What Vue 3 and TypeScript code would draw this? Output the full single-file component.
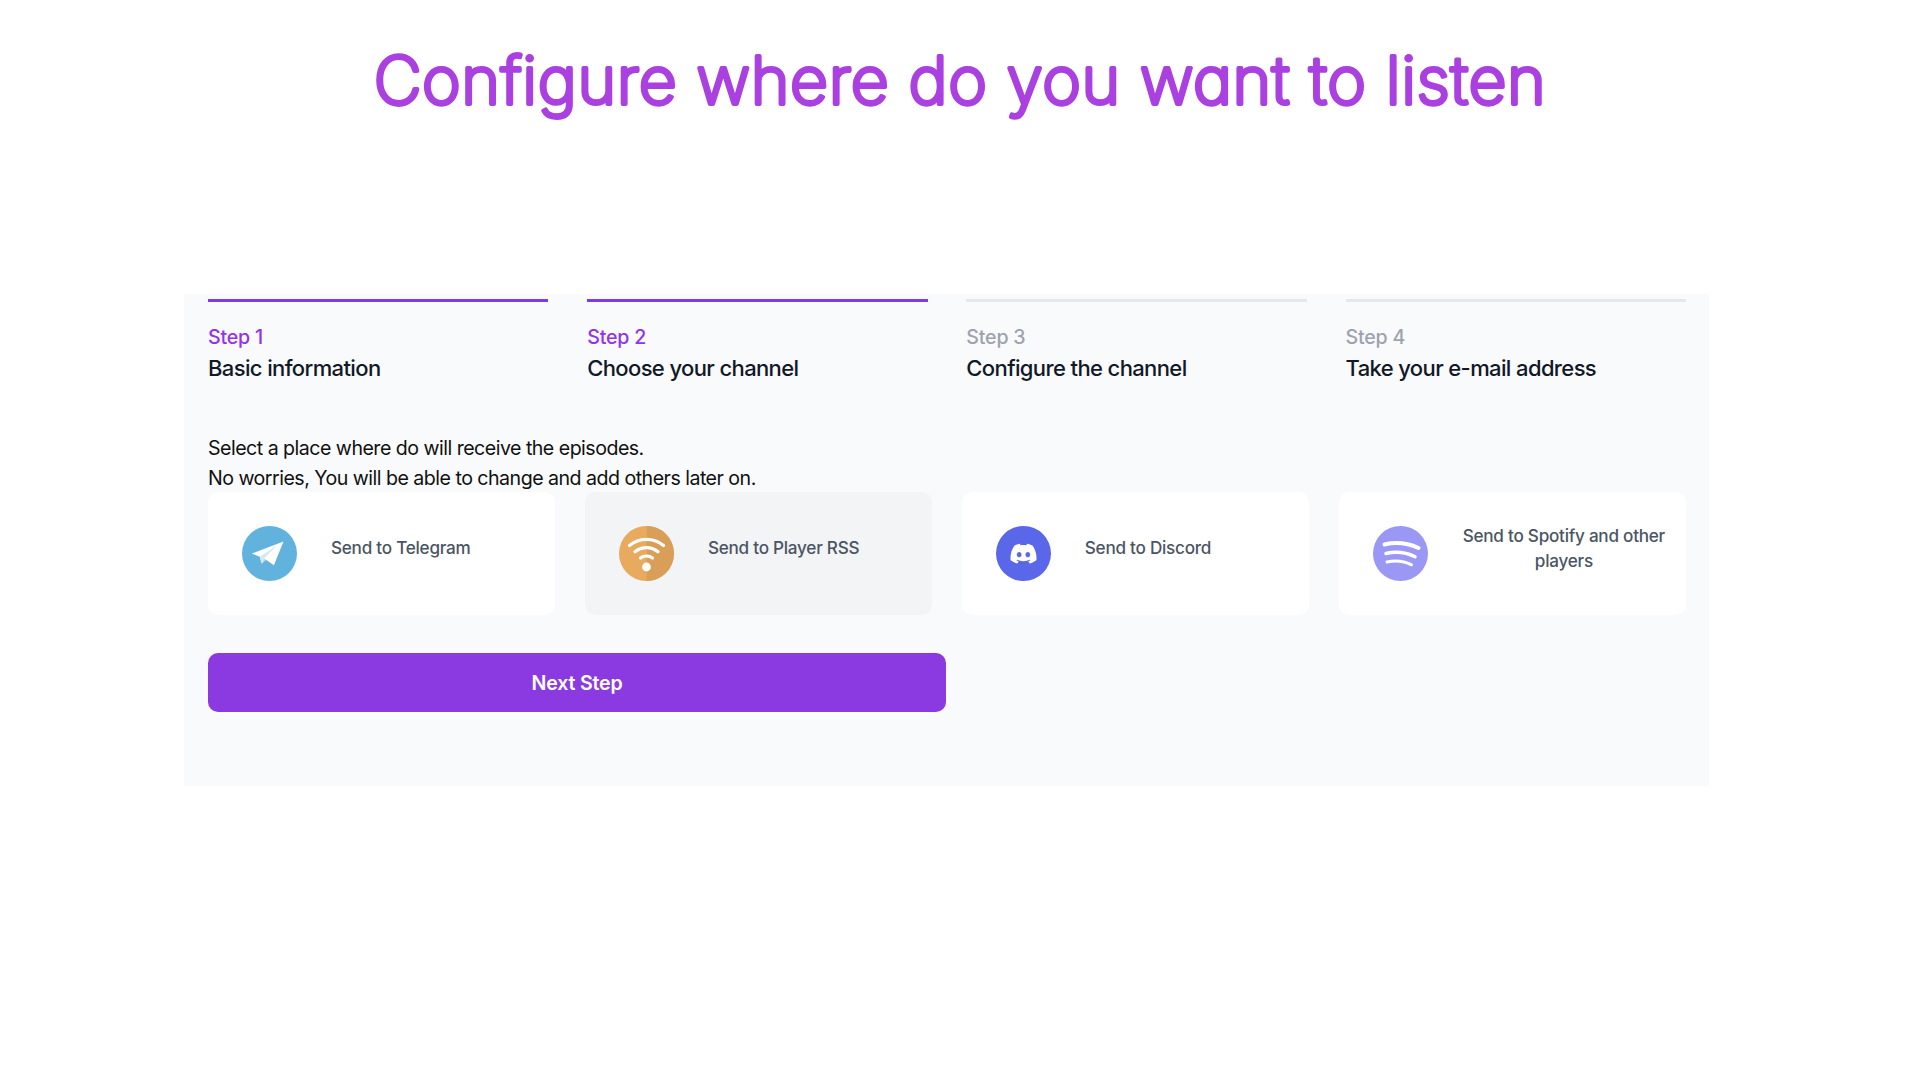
<template>
  <div class="page">
    <h1 class="title">
      <svg class="title-svg" width="1920" height="80" role="img">
        <text x="960" y="64" text-anchor="middle">Configure where do you want to listen</text>
      </svg>
    </h1>

    <section class="panel">
      <ol class="steps">
        <li v-for="step in steps" :key="step.label" class="step" :class="{ done: step.done }">
          <span class="step-label">{{ step.label }}</span>
          <span class="step-name">{{ step.name }}</span>
        </li>
      </ol>

      <p class="intro">
        Select a place where do will receive the episodes.<br />
        No worries, You will be able to change and add others later on.
      </p>

      <div class="channels">
        <button
          v-for="channel in channels"
          :key="channel.id"
          type="button"
          class="channel"
          :class="{ selected: channel.id === selected }"
        >
          <svg class="channel-icon" viewBox="0 0 55 55" aria-hidden="true">
            <template v-if="channel.id === 'telegram'">
              <circle cx="27.5" cy="27.5" r="27.5" fill="#61b3dd" />
              <path d="M41.5 15.5 9.8 27.6l8 3.2 1.9 6.6 4.300-3.700 7.900 5.500z" fill="#fff" />
              <path d="M17.800 30.800 35 19.500 22 32.500l-2.300 4.900z" fill="#d7e6f2" />
              <path d="M22 32.500 24 33.700l-4.300 3.700z" fill="#bcd3e6" />
            </template>

            <template v-else-if="channel.id === 'rss'">
              <circle cx="27.500" cy="27.500" r="27.500" fill="#e8aa5e" />
              <path d="M27.500 0a27.500 27.500 0 0 1 0 55z" fill="#d99f59" />
              <g fill="none" stroke="#fff" stroke-linecap="round" stroke-width="3.200">
                <path d="M10.500 19.500c9.500-8.300 24.500-8.300 34 0" />
                <path d="M16 25.800c6.500-5.600 16.500-5.600 23 0" />
                <path d="M21.500 32c3.200-2.700 8.800-2.700 12 0" />
              </g>
              <circle cx="27.500" cy="41" r="4.400" fill="#fff" />
            </template>

            <template v-else-if="channel.id === 'discord'">
              <circle cx="27.500" cy="27.500" r="27.500" fill="#5a67e8" />
              <path
                transform="translate(14.500 14.700) scale(1.083)"
                fill="#fff"
                d="M20.317 4.3698a19.7913 19.7913 0 00-4.8851-1.5152.0741.0741 0 00-.0785.0371c-.211.3753-.4447.8648-.6083 1.2495-1.8447-.2762-3.68-.2762-5.4868 0-.1636-.3933-.4058-.8742-.6177-1.2495a.077.077 0 00-.0785-.037 19.7363 19.7363 0 00-4.8852 1.515.0699.0699 0 00-.0321.0277C.5334 9.0458-.319 13.5799.0992 18.0578a.0824.0824 0 00.0312.0561c2.0528 1.5076 4.0413 2.4228 5.9929 3.0294a.0777.0777 0 00.0842-.0276c.4616-.6304.8731-1.2952 1.226-1.9942a.076.076 0 00-.0416-.1057c-.6528-.2476-1.2743-.5495-1.8722-.8923a.077.077 0 01-.0076-.1277c.1258-.0943.2517-.1923.3718-.2914a.0743.0743 0 01.0776-.0105c3.9278 1.7933 8.18 1.7933 12.0614 0a.0739.0739 0 01.0785.0095c.1202.099.246.1981.3728.2924a.077.077 0 01-.0066.1276 12.2986 12.2986 0 01-1.873.8914.0766.0766 0 00-.0407.1067c.3604.698.7719 1.3628 1.225 1.9932a.076.076 0 00.0842.0286c1.961-.6067 3.9495-1.5219 6.0023-3.0294a.077.077 0 00.0313-.0552c.5004-5.177-.8382-9.6739-3.5485-13.6604a.061.061 0 00-.0312-.0286zM8.02 15.3312c-1.1825 0-2.1569-1.0857-2.1569-2.419 0-1.3332.9555-2.4189 2.157-2.4189 1.2108 0 2.1757 1.0952 2.1568 2.419 0 1.3332-.9555 2.4189-2.1569 2.4189zm7.9748 0c-1.1825 0-2.1569-1.0857-2.1569-2.419 0-1.3332.9554-2.4189 2.1569-2.4189 1.2108 0 2.1757 1.0952 2.1568 2.419 0 1.3332-.946 2.4189-2.1568 2.4189Z"
              />
            </template>

            <template v-else>
              <circle cx="27.500" cy="27.500" r="27.500" fill="#9b97f5" />
              <g fill="none" stroke="#fff" stroke-linecap="round">
                <path d="M11.500 18.500c10-2.300 23-1.500 34 3.500" stroke-width="4" />
                <path d="M13 27.500c9-2 20-1.200 29 3.300" stroke-width="3.500" />
                <path d="M14 36c7.500-1.600 17-1 24.500 2.800" stroke-width="3" />
              </g>
            </template>
          </svg>
          <span class="channel-text">{{ channel.text }}</span>
        </button>
      </div>

      <button type="button" class="next">Next Step</button>
    </section>
  </div>
</template>

<script setup lang="ts">
import { ref } from 'vue'

interface Step {
  label: string
  name: string
  done: boolean
}

interface Channel {
  id: string
  text: string
}

const steps: Step[] = [
  { label: 'Step 1', name: 'Basic information', done: true },
  { label: 'Step 2', name: 'Choose your channel', done: true },
  { label: 'Step 3', name: 'Configure the channel', done: false },
  { label: 'Step 4', name: 'Take your e-mail address', done: false }
]

const channels: Channel[] = [
  { id: 'telegram', text: 'Send to Telegram' },
  { id: 'rss', text: 'Send to Player RSS' },
  { id: 'discord', text: 'Send to Discord' },
  { id: 'spotify', text: 'Send to Spotify and other players' }
]

const selected = ref('rss')
</script>

<style scoped>
.page {
  font-family: Inter, 'Liberation Sans', sans-serif;
  padding-top: 40px;
}

.title {
  margin: 0 0 174px;
  height: 80px;
  font-size: 66px;
  line-height: 80px;
  font-weight: 200;
}

.title-svg {
  display: block;
}

/* thin weight + thick round-joined stroke gives the rounded display look */
.title-svg text {
  font-feature-settings: 'cv11' 1;
  letter-spacing: 0.6px;
  fill: #aa40e0;
  stroke: #aa40e0;
  stroke-width: 4px;
  stroke-linejoin: round;
}

.panel {
  margin-left: 184px;
  width: 1525px;
  box-sizing: border-box;
  padding: 5px 23px 74px 24px;
  background: #f9fafb;
}

.steps {
  display: grid;
  grid-template-columns: repeat(4, 1fr);
  gap: 38.7px;
  margin: 0;
  padding: 0;
  list-style: none;
}

.step {
  display: flex;
  flex-direction: column;
  border-top: 3px solid #e5e7eb;
  padding-top: 21px;
}

.step.done {
  border-top-color: #7c3aed;
}

.step-label {
  font-size: 19.6px;
  line-height: 29.4px;
  font-weight: 500;
  letter-spacing: -0.2px;
  color: #9ca3af;
}

.step.done .step-label {
  color: #9333ea;
}

.step-name {
  font-size: 22px;
  line-height: 33px;
  font-weight: 500;
  letter-spacing: -0.62px;
  color: #111827;
}

.intro {
  margin: 49px 0 -1px;
  font-size: 19.6px;
  line-height: 29.4px;
  letter-spacing: -0.52px;
  color: #111;
}

.channels {
  display: grid;
  grid-template-columns: repeat(4, 1fr);
  gap: 29.6px;
}

.channel {
  display: flex;
  align-items: center;
  gap: 34px;
  height: 123px;
  padding: 0 20px 0 34px;
  border: 0;
  border-radius: 10px;
  background: #fff;
  font-family: inherit;
}

.channel.selected {
  background: #f3f4f6;
}

.channel-icon {
  flex: none;
  width: 55px;
  height: 55px;
}

.channel-text {
  padding-bottom: 10px;
  font-size: 17.14px;
  line-height: 24.5px;
  font-weight: 500;
  letter-spacing: -0.25px;
  color: #4b5563;
  text-align: center;
}

.next {
  display: block;
  width: 738px;
  height: 59px;
  margin-top: 38px;
  border: 0;
  border-radius: 10px;
  background: #8a3ae0;
  color: #fff;
  font-family: inherit;
  font-size: 19.6px;
  font-weight: 600;
  letter-spacing: -0.2px;
}
</style>
